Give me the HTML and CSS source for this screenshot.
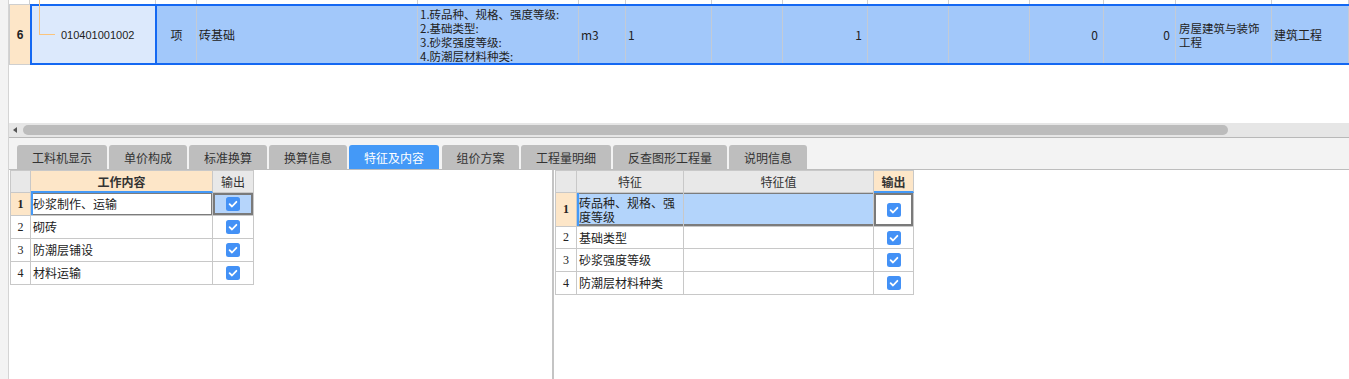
FILE: index.html
```html
<!doctype html>
<html lang="zh-CN">
  <head>
    <meta charset="UTF-8" />
    <title>清单 • 特征及内容</title>
    <link rel="stylesheet" href="styles.css">
  </head>
  <body>
    <div class="app">
      <!-- левая полоска -->
      <div class="gutter"></div>

      <div class="main">
        <!-- верхняя таблица -->
        <div class="top">
          <div class="stub">
            <div></div><div></div><div></div><div></div><div></div><div></div><div></div>
            <div></div><div></div><div></div><div></div><div></div><div></div><div></div><div></div>
          </div>
          <div class="row6">
            <div class="rn rn-cur">6</div>
            <div class="sel">
              <div class="c code">010401001002</div>
              <div class="c center">项</div>
              <div class="c">砖基础</div>
              <div class="c desc">
                <div class="ln">1.砖品种、规格、强度等级:</div>
                <div class="ln">2.基础类型:</div>
                <div class="ln">3.砂浆强度等级:</div>
                <div class="ln">4.防潮层材料种类:</div>
              </div>
              <div class="c">m3</div>
              <div class="c">1</div>
              <div class="c"></div>
              <div class="c right">1</div>
              <div class="c"></div>
              <div class="c"></div>
              <div class="c right">0</div>
              <div class="c right">0</div>
              <div class="c wrap">
                <div class="ln">房屋建筑与装饰</div>
                <div class="ln">工程</div>
              </div>
              <div class="c">建筑工程</div>
            </div>
          </div>
        </div>

        <!-- горизонтальный скролл -->
        <div class="hscroll">
          <span class="arrow"></span>
          <div class="thumb"></div>
        </div>

        <!-- вкладки -->
        <div class="tabs">
          <div class="tab w90">工料机显示</div>
          <div class="tab">单价构成</div>
          <div class="tab">标准换算</div>
          <div class="tab">换算信息</div>
          <div class="tab w90 active">特征及内容</div>
          <div class="tab w77">组价方案</div>
          <div class="tab w90">工程量明细</div>
          <div class="tab w114">反查图形工程量</div>
          <div class="tab">说明信息</div>
        </div>

        <div class="panes">
          <!-- 工作内容 -->
          <div class="pane-left">
            <div class="grid gl">
              <div class="h"></div>
              <div class="h peach bold">工作内容</div>
              <div class="h">输出</div>

              <div class="n peach bold">1</div>
              <div class="t cur-l">砂浆制作、运输</div>
              <div class="k cur-k"><svg width="14" height="14" viewBox="0 0 14 14"><rect width="14" height="14" rx="2.5" fill="#4391f6"/><path d="M3.6 7.2 L6 9.5 L10.4 4.8" fill="none" stroke="#fff" stroke-width="1.8" stroke-linecap="round" stroke-linejoin="round"/></svg></div>

              <div class="n">2</div>
              <div class="t">砌砖</div>
              <div class="k"><svg width="14" height="14" viewBox="0 0 14 14"><rect width="14" height="14" rx="2.5" fill="#4391f6"/><path d="M3.6 7.2 L6 9.5 L10.4 4.8" fill="none" stroke="#fff" stroke-width="1.8" stroke-linecap="round" stroke-linejoin="round"/></svg></div>

              <div class="n">3</div>
              <div class="t">防潮层铺设</div>
              <div class="k"><svg width="14" height="14" viewBox="0 0 14 14"><rect width="14" height="14" rx="2.5" fill="#4391f6"/><path d="M3.6 7.2 L6 9.5 L10.4 4.8" fill="none" stroke="#fff" stroke-width="1.8" stroke-linecap="round" stroke-linejoin="round"/></svg></div>

              <div class="n">4</div>
              <div class="t">材料运输</div>
              <div class="k"><svg width="14" height="14" viewBox="0 0 14 14"><rect width="14" height="14" rx="2.5" fill="#4391f6"/><path d="M3.6 7.2 L6 9.5 L10.4 4.8" fill="none" stroke="#fff" stroke-width="1.8" stroke-linecap="round" stroke-linejoin="round"/></svg></div>
            </div>
          </div>

          <div class="splitter"></div>

          <!-- 特征 -->
          <div class="pane-right">
            <div class="grid gr">
              <div class="h"></div>
              <div class="h">特征</div>
              <div class="h">特征值</div>
              <div class="h peach bold">输出</div>

              <div class="n peach bold">1</div>
              <div class="t hl cur-a">砖品种、规格、强度等级</div>
              <div class="t hl cur-b"></div>
              <div class="k cur-w"><svg width="14" height="14" viewBox="0 0 14 14"><rect width="14" height="14" rx="2.5" fill="#4391f6"/><path d="M3.6 7.2 L6 9.5 L10.4 4.8" fill="none" stroke="#fff" stroke-width="1.8" stroke-linecap="round" stroke-linejoin="round"/></svg></div>

              <div class="n">2</div>
              <div class="t">基础类型</div>
              <div class="t"></div>
              <div class="k"><svg width="14" height="14" viewBox="0 0 14 14"><rect width="14" height="14" rx="2.5" fill="#4391f6"/><path d="M3.6 7.2 L6 9.5 L10.4 4.8" fill="none" stroke="#fff" stroke-width="1.8" stroke-linecap="round" stroke-linejoin="round"/></svg></div>

              <div class="n">3</div>
              <div class="t">砂浆强度等级</div>
              <div class="t"></div>
              <div class="k"><svg width="14" height="14" viewBox="0 0 14 14"><rect width="14" height="14" rx="2.5" fill="#4391f6"/><path d="M3.6 7.2 L6 9.5 L10.4 4.8" fill="none" stroke="#fff" stroke-width="1.8" stroke-linecap="round" stroke-linejoin="round"/></svg></div>

              <div class="n">4</div>
              <div class="t">防潮层材料种类</div>
              <div class="t"></div>
              <div class="k"><svg width="14" height="14" viewBox="0 0 14 14"><rect width="14" height="14" rx="2.5" fill="#4391f6"/><path d="M3.6 7.2 L6 9.5 L10.4 4.8" fill="none" stroke="#fff" stroke-width="1.8" stroke-linecap="round" stroke-linejoin="round"/></svg></div>
            </div>
          </div>
        </div>
      </div>
    </div>
  </body>
</html>
```

FILE: styles.css
```css
/* Сброс */
* {
  margin: 0;
  padding: 0;
  box-sizing: border-box;
}

body {
  background: #ffffff;
  font-family: "Noto Sans CJK SC", "Liberation Sans", sans-serif;
  font-size: 12px;
  color: #222;
}

.app {
  display: flex;
  height: 379px;
  overflow: hidden;
}

.gutter {
  width: 9px;
  flex: none;
  background: #f3f3f3;
  border-right: 1px solid #d4d4d4;
}

.main {
  flex: 1;
  display: flex;
  flex-direction: column;
  min-width: 0;
}

/* Верхняя таблица */
.top {
  height: 123px;
  flex: none;
}

.stub {
  display: grid;
  grid-template-columns: 21px 126px 41px 221px 161px 47px 86px 71px 85px 81px 81px 74px 72px 96px 1fr;
  height: 4px;
}

.stub div {
  border-right: 1px solid #d0d0d0;
}

.row6 {
  display: flex;
  height: 61px;
}

.rn {
  width: 21px;
  flex: none;
  display: flex;
  align-items: center;
  justify-content: center;
  font-family: "Liberation Sans", sans-serif;
  border: 1px solid #cfcfcf;
  border-right: none;
}

.rn-cur {
  background: #fde6c8;
  font-weight: 700;
}

.sel {
  flex: 1;
  display: grid;
  grid-template-columns: 125px 40px 221px 161px 47px 86px 71px 85px 81px 81px 74px 72px 96px 1fr;
  border: 2px solid #1468f2;
  border-right: none;
  background: #a2c8fa;
}

.c {
  display: flex;
  align-items: center;
  padding: 0 2px;
  border-right: 1px solid #c3cbd6;
  white-space: nowrap;
  overflow: hidden;
}

.c.center {
  justify-content: center;
}

.c.right {
  justify-content: flex-end;
  padding-right: 5px;
}

/* Многострочные ячейки */
.c.desc,
.c.wrap {
  flex-direction: column;
  align-items: flex-start;
  justify-content: center;
  padding-left: 2px;
}

.c.wrap {
  padding-left: 3px;
}

.ln {
  height: 14px;
  line-height: 14px;
  font-size: 11.5px;
}

.code {
  position: relative;
  overflow: visible;
  background: #dce9fc;
  border-right: 2px solid #1468f2;
  padding-left: 29px;
  font-family: "Liberation Sans", sans-serif;
  font-size: 11px;
}

/* Линия дерева */
.code::before {
  content: '';
  position: absolute;
  left: 7px;
  top: -6px;
  width: 1px;
  height: 34px;
  background: #fbc47c;
}

.code::after {
  content: '';
  position: absolute;
  left: 7px;
  top: 28px;
  width: 16px;
  height: 1px;
  background: #fbc47c;
}

/* Скролл */
.hscroll {
  height: 15px;
  flex: none;
  display: flex;
  align-items: center;
  gap: 6px;
  padding-left: 4px;
  background: #e6e6e6;
  border-bottom: 1px solid #b8b8b8;
}

.arrow {
  width: 0;
  height: 0;
  border-top: 3px solid transparent;
  border-bottom: 3px solid transparent;
  border-right: 4px solid #555;
}

.thumb {
  width: 1205px;
  height: 10px;
  border-radius: 5px;
  background: #bcbcbc;
}

/* Вкладки */
.tabs {
  height: 32px;
  flex: none;
  display: flex;
  align-items: flex-end;
  gap: 2px;
  padding-left: 8px;
  background: #f3f3f3;
  border-bottom: 1px solid #bdbdbd;
}

.tab {
  width: 78px;
  height: 24px;
  display: flex;
  align-items: center;
  justify-content: center;
  background: #bebebe;
  color: #333;
  border-radius: 3px 3px 0 0;
}

.tab.w90 { width: 90px; }
.tab.w77 { width: 77px; margin-left: 1px; }
.tab.w114 { width: 114px; }

.tab.active {
  background: #4499f7;
  color: #fff;
}

/* Нижние панели */
.panes {
  flex: 1;
  display: flex;
}

.pane-left {
  width: 543px;
  flex: none;
  padding-left: 1px;
}

.splitter {
  width: 2px;
  flex: none;
  background: #c4c4c4;
}

.pane-right {
  flex: 1;
  padding-left: 1px;
}

.grid {
  display: grid;
  border-top: 1px solid #c8c8c8;
  border-left: 1px solid #c8c8c8;
}

.gl {
  width: 244px;
  grid-template-columns: 20px 182px 41px;
  grid-template-rows: 22px repeat(4, 23px);
}

.gr {
  width: 359px;
  grid-template-columns: 21px 107px 190px 40px;
  grid-template-rows: 22px 34px 22px 23px 23px;
}

.grid > div {
  border-right: 1px solid #c8c8c8;
  border-bottom: 1px solid #c8c8c8;
  display: flex;
  align-items: center;
  overflow: hidden;
}

.h {
  background: #e8e8e8;
  justify-content: center;
  color: #333;
}

.peach {
  background: #fde6c8;
}

.h.peach {
  border-bottom: 2px solid #4499f7 !important;
}

.bold {
  font-weight: 700;
}

.n {
  justify-content: center;
  font-family: "Liberation Serif", serif;
  font-size: 12px;
}

.t {
  padding-left: 2px;
  line-height: 14px;
}

.k {
  justify-content: center;
}

/* Выделенная строка */
.cur-l {
  box-shadow: inset 2px 0 0 #4499f7, inset 0 0 0 1px #7c7c7c;
}

.cur-k {
  background: #b6d5fb;
  box-shadow: inset 0 0 0 2px #7a7a7a;
}

.hl {
  background: #b3d4fb;
}

.cur-a {
  box-shadow: inset 2px 0 0 #4499f7, inset 0 1px 0 #7c7c7c, inset 0 -2px 0 #7c7c7c;
}

.cur-b {
  box-shadow: inset 0 1px 0 #7c7c7c, inset 0 -2px 0 #7c7c7c;
}

.cur-w {
  background: #fff;
  box-shadow: inset 0 0 0 2px #7a7a7a;
}
```
